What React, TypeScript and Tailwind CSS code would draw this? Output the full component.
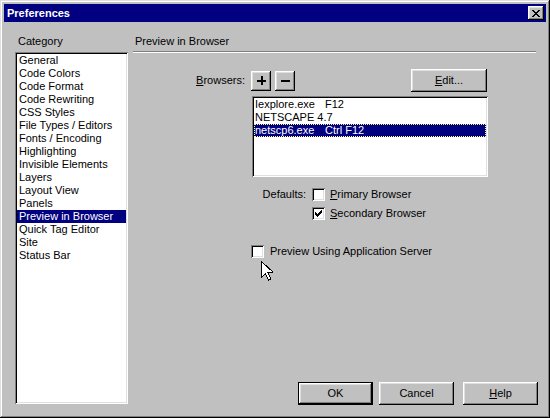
import type { ReactNode } from "react";

const RAISED =
  "shadow-[inset_-1px_-1px_0_#000,inset_1px_1px_0_#fff,inset_-2px_-2px_0_#808080,inset_2px_2px_0_#dfdfdf]";
const SUNKEN =
  "shadow-[inset_1px_1px_0_#808080,inset_-1px_-1px_0_#fff,inset_2px_2px_0_#000,inset_-2px_-2px_0_#dfdfdf]";

const CATEGORIES = [
  "General",
  "Code Colors",
  "Code Format",
  "Code Rewriting",
  "CSS Styles",
  "File Types / Editors",
  "Fonts / Encoding",
  "Highlighting",
  "Invisible Elements",
  "Layers",
  "Layout View",
  "Panels",
  "Preview in Browser",
  "Quick Tag Editor",
  "Site",
  "Status Bar",
];

const BROWSERS = [
  { name: "Iexplore.exe", key: "F12" },
  { name: "NETSCAPE 4.7", key: "" },
  { name: "netscp6.exe", key: "Ctrl F12" },
];

function Checkbox({ checked }: { checked?: boolean }) {
  return (
    <div className={`grid h-[13px] w-[13px] shrink-0 place-items-center bg-white ${SUNKEN}`}>
      {checked && (
        <svg width="7" height="7" viewBox="0 0 7 7" shapeRendering="crispEdges">
          <path
            d="M6 0h1v3H6zM5 1h1v3H5zM4 2h1v3H4zM3 3h1v3H3zM2 4h1v3H2zM1 3h1v3H1zM0 2h1v3H0z"
            fill="#000"
          />
        </svg>
      )}
    </div>
  );
}

function Button({ children, isDefault, className = "" }: { children: ReactNode; isDefault?: boolean; className?: string }) {
  if (isDefault) {
    return (
      <div className={`h-[23px] w-[75px] border border-black ${className}`}>
        <div className={`flex h-full w-full items-center justify-center bg-[#c0c0c0] ${RAISED}`}>{children}</div>
      </div>
    );
  }
  return (
    <div className={`flex h-[23px] w-[75px] items-center justify-center bg-[#c0c0c0] ${RAISED} ${className}`}>
      {children}
    </div>
  );
}

export default function App() {
  return (
    <div className="h-[418px] w-[550px] bg-[#c0c0c0] font-['Liberation_Sans',Arial,sans-serif] text-[11px] leading-[13px] text-black">
      <div className="relative flex h-full w-full flex-col p-[4px] shadow-[inset_-1px_-1px_0_#000,inset_1px_1px_0_#dfdfdf,inset_-2px_-2px_0_#808080,inset_2px_2px_0_#fff]">
        {/* Title bar */}
        <div className="flex h-[18px] shrink-0 items-center justify-between bg-[#000080] pl-[3px] pr-[2px]">
          <span className="text-[11px] font-bold text-white">Preferences</span>
          <div className={`grid h-[14px] w-[16px] place-items-center bg-[#c0c0c0] ${RAISED}`}>
            <svg width="8" height="7" viewBox="0 0 8 7" shapeRendering="crispEdges">
              <path d="M0 0h2v1H0zM6 0h2v1H6zM1 1h2v1H1zM5 1h2v1H5zM2 2h4v1H2zM3 3h2v1H3zM2 4h4v1H2zM1 5h2v1H1zM5 5h2v1H5zM0 6h2v1H0zM6 6h2v1H6z" fill="#000" />
            </svg>
          </div>
        </div>

        {/* Body */}
        <div className="flex min-h-0 flex-1">
          {/* Category column */}
          <div className="ml-[11px] flex w-[113px] flex-col pt-[13px]">
            <div className="pl-[3px]">Category</div>
            <div className={`mt-[4px] h-[352px] bg-white p-[2px] ${SUNKEN}`}>
              {CATEGORIES.map((c) => (
                <div
                  key={c}
                  className={`h-[13px] whitespace-nowrap pl-[2px] ${c === "Preview in Browser" ? "bg-[#000080] text-white" : ""}`}
                >
                  {c}
                </div>
              ))}
            </div>
          </div>

          {/* Settings column */}
          <div className="ml-[5px] flex flex-1 flex-col pt-[13px] pr-[10px]">
            <div className="pl-[2px]">Preview in Browser</div>
            <div className="mt-[3px] h-[2px] border-t border-[#808080] border-b border-b-white" />

            <div className="mt-[16px] flex h-[23px] items-center">
              <div className="w-[113px] pr-[1px] text-right">
                <span className="underline">B</span>rowsers:
              </div>
              <div className={`ml-[5px] grid h-[20px] w-[20px] place-items-center bg-[#c0c0c0] ${RAISED}`}>
                <svg width="9" height="9" viewBox="0 0 9 9" shapeRendering="crispEdges">
                  <path d="M3.5 0h2v9h-2zM0 3.5h9v2H0z" fill="#000" />
                </svg>
              </div>
              <div className={`ml-[4px] grid h-[20px] w-[20px] place-items-center bg-[#c0c0c0] ${RAISED}`}>
                <svg width="9" height="9" viewBox="0 0 9 9" shapeRendering="crispEdges">
                  <path d="M0 3.5h9v2H0z" fill="#000" />
                </svg>
              </div>
              <Button className="ml-auto mr-[49px] w-[76px]">
                <span>
                  <span className="underline">E</span>dit...
                </span>
              </Button>
            </div>

            <div className={`ml-[119px] mt-[4px] h-[81px] w-[236px] bg-white p-[2px] ${SUNKEN}`}>
              {BROWSERS.map((b, i) => (
                <div
                  key={b.name}
                  className={`flex h-[13px] whitespace-nowrap pl-[1px] ${
                    i === 2 ? "bg-[#000080] text-white outline outline-1 -outline-offset-1 outline-dotted outline-[#ffff80]" : ""
                  }`}
                >
                  <span className="w-[70px]">{b.name}</span>
                  <span>{b.key}</span>
                </div>
              ))}
            </div>

            <div className="mt-[11px] flex items-center">
              <div className="w-[173px] text-right">Defaults:</div>
              <div className="ml-[6px]">
                <Checkbox />
              </div>
              <span className="ml-[5px]">
                <span className="underline">P</span>rimary Browser
              </span>
            </div>
            <div className="ml-[179px] mt-[6px] flex items-center">
              <Checkbox checked />
              <span className="ml-[5px]">
                <span className="underline">S</span>econdary Browser
              </span>
            </div>

            <div className="ml-[118px] mt-[25px] flex items-center">
              <Checkbox />
              <span className="ml-[6px]">Preview Using Application Server</span>
            </div>

            <div className="mb-[9px] mr-[-2px] mt-auto flex justify-end">
              <Button isDefault>OK</Button>
              <Button className="ml-[6px]">Cancel</Button>
              <Button className="ml-[9px]">
                <span>
                  <span className="underline">H</span>elp
                </span>
              </Button>
            </div>
          </div>
        </div>

        {/* Mouse pointer */}
        <svg
          className="pointer-events-none absolute left-[261px] top-[261px]"
          width="12"
          height="20"
          viewBox="0 0 12 20"
          shapeRendering="crispEdges"
        >
          <path d="M0.5 0.5v16l4-4 3 6.5 2.5-1-3-6.5h5.5z" fill="#fff" stroke="#000" strokeWidth="1" />
        </svg>
      </div>
    </div>
  );
}
